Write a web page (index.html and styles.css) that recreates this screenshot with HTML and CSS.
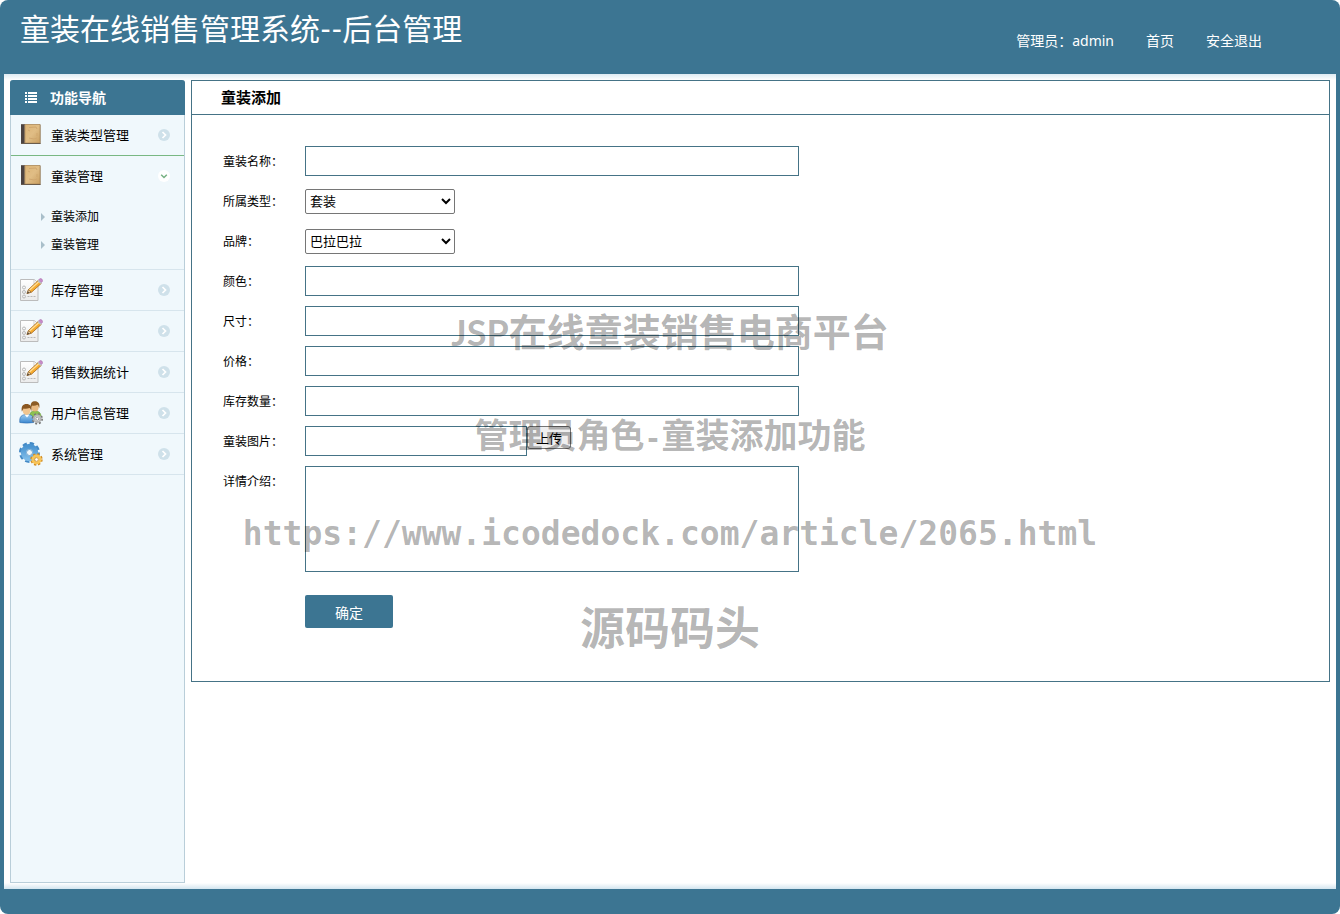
FILE: index.html
```html
<!DOCTYPE html>
<html lang="zh-CN">
<head>
<meta charset="utf-8">
<title>童装在线销售管理系统--后台管理</title>
<link rel="stylesheet" href="styles.css">
</head>
<body>
<svg class="defs" aria-hidden="true">
  <linearGradient id="g-cover" x1="0" y1="0" x2="1" y2="1"><stop offset="0" stop-color="#ddb577"/><stop offset=".5" stop-color="#e0bd85"/><stop offset="1" stop-color="#c99f61"/></linearGradient>
  <linearGradient id="g-paper" x1="0" y1="0" x2="0" y2="1"><stop offset="0" stop-color="#ffffff"/><stop offset="1" stop-color="#ebebeb"/></linearGradient>
  <linearGradient id="g-blue" x1="0" y1="0" x2="0" y2="1"><stop offset="0" stop-color="#9ccdf0"/><stop offset="1" stop-color="#3b86cf"/></linearGradient>
  <linearGradient id="g-gear" x1="0" y1="0" x2="0" y2="1"><stop offset="0" stop-color="#4a94d0"/><stop offset="1" stop-color="#7dbbe8"/></linearGradient>
  <symbol id="i-book" viewBox="0 0 24 24">
    <path d="M2 1.500h19.500V21H2z" fill="#7d684d"/>
    <path d="M6 1.500h15V20H6z" fill="url(#g-cover)" stroke="#a98552" stroke-width=".6"/>
    <path d="M2 1.300h4V20.500H2z" fill="#4c4341"/>
    <path d="M5 1.300h1V20.500H5z" fill="#89745b"/>
    <path d="M10 4.500l7-.5 1 2M9 7l2 1M10 15l5 1 3-1M18 10v3" fill="none" stroke="#d0a76f" stroke-width="1"/>
    <path d="M2 20.500h19.500" stroke="#665a4c" stroke-width=".9"/>
  </symbol>
  <symbol id="i-edit" viewBox="0 0 24 24">
    <path d="M1.500 1.500h14l3.500 4V22.500h-17.500z" fill="url(#g-paper)" stroke="#bcbcbc"/>
    <path d="M15 1.500v4.500h4" fill="#fff" stroke="#cfcfcf"/>
    <g fill="none" stroke="#b9b9b9"><circle cx="5" cy="9.500" r="1.500"/><circle cx="5" cy="14" r="1.500"/><circle cx="5" cy="18.500" r="1.500"/><path d="M8.500 18.500h8" stroke-dasharray="2 1"/><path d="M8 14h3"/></g>
    <path d="M8 15.500l1.500-4L19.200 2.500l3 3-9.700 8.700z" fill="#f7ab2f" stroke="#a66a20" stroke-width=".8"/>
    <path d="M10.500 12L20 3.500" stroke="#ffe09a" stroke-width="1.200"/>
    <path d="M8 15.500l1.500-3.700 2.600 2.200z" fill="#f4d9ad" stroke="#79522a" stroke-width=".6"/>
    <path d="M8 15.500l1.100-2 1 1z" fill="#333"/>
    <path d="M18.600 3l1-1 2.900 2.900-1 1z" fill="#b8c1c9"/>
    <path d="M19.800 1.700c1-1.400 2.200-1.400 3.200-.5.900 1 .9 2-.5 3.300z" fill="#c98bc9" stroke="#a369a8" stroke-width=".5"/>
  </symbol>
  <symbol id="i-users" viewBox="0 0 24 24">
    <path d="M10.500 15.500c0-4 2-5.500 5.500-5.500s6 1.500 6 6z" fill="#8cc152" stroke="#659a34" stroke-width=".6"/>
    <ellipse cx="16" cy="6" rx="3.700" ry="4.500" fill="#e8b981"/>
    <path d="M11.800 7.500C11 2 13 .3 16 .3s5.200 2 4.200 7c-.5-2-1-3-1.600-3.500-2 1-4.500 1-5.500.7z" fill="#8b5b25"/>
    <path d="M.8 21.500c-.5-6 1.700-8 7.200-8s7.200 2.500 6.700 8q-7 1.200-13.900 0z" fill="url(#g-blue)" stroke="#3472b5" stroke-width=".7"/>
    <path d="M5.500 13.500l2.500 3 2.500-3" fill="#fff"/>
    <ellipse cx="7.500" cy="9" rx="4" ry="5" fill="#f1c58f"/>
    <path d="M2.800 10.500C2 5 4 3 7.500 3s5.800 2 4.800 7.500c-.5-2-.8-2.700-1.700-3.500-2 .8-4.600.9-6 .5z" fill="#8a5722"/>
    <circle cx="18.300" cy="17.800" r="4.700" fill="none" stroke="#777" stroke-width="2" stroke-dasharray="1.900 1.790"/>
    <circle cx="18.300" cy="17.800" r="3.300" fill="#f2f2f2" stroke="#b5b5b5" stroke-width="2"/>
    <circle cx="18.300" cy="17.800" r="1.500" fill="#fff" stroke="#777" stroke-width=".7"/>
  </symbol>
  <symbol id="i-gears" viewBox="0 0 24 24">
    <circle cx="10.500" cy="10.500" r="9" fill="none" stroke="#4389c5" stroke-width="3" stroke-dasharray="4.200 2.860"/>
    <circle cx="10.500" cy="10.500" r="6" fill="none" stroke="url(#g-gear)" stroke-width="5.500"/>
    <circle cx="10.500" cy="10.500" r="3" fill="#f0f8fc" stroke="#4587bd" stroke-width=".7"/>
    <circle cx="17.500" cy="17.500" r="5" fill="none" stroke="#d18a20" stroke-width="2.400" stroke-dasharray="2.200 1.730"/>
    <circle cx="17.500" cy="17.500" r="3.500" fill="none" stroke="#f8c456" stroke-width="3"/>
    <circle cx="17.500" cy="17.500" r="1.800" fill="#fff" stroke="#c88525" stroke-width=".7"/>
  </symbol>
  <symbol id="i-next" viewBox="0 0 12 12"><circle cx="6" cy="6" r="6" fill="#cfe1ea"/><path d="M4.500 3l3 3-3 3" fill="none" stroke="#fff" stroke-width="1.700"/></symbol>
  <symbol id="i-open" viewBox="0 0 12 12"><circle cx="6" cy="6" r="6" fill="#fff"/><path d="M3.200 4.800L6 7.500l2.800-2.700" fill="none" stroke="#76b183" stroke-width="1.500"/></symbol>
</svg>

<div class="app">
  <header class="top">
    <h1 class="brand">童装在线销售管理系统--后台管理</h1>
    <nav class="account">
      <span>管理员：admin</span>
      <a href="#home">首页</a>
      <a href="#logout">安全退出</a>
    </nav>
  </header>

  <div class="body">
    <nav class="side" aria-label="功能导航">
      <h2 class="side-title">
        <svg class="list-icon" viewBox="0 0 12 11" aria-hidden="true"><path d="M0 0h2v2H0zM3 0h9v2H3zM0 3h2v2H0zM3 3h9v2H3zM0 6h2v2H0zM3 6h9v2H3zM0 9h2v2H0zM3 9h9v2H3z" fill="#fff"/></svg>
        功能导航
      </h2>
      <ul class="menu">
        <li class="group before-open"><a class="item" href="#type"><svg class="icon"><use href="#i-book"/></svg><span class="name">童装类型管理</span><svg class="arrow"><use href="#i-next"/></svg></a></li>
        <li class="group"><a class="item" href="#clothes"><svg class="icon"><use href="#i-book"/></svg><span class="name">童装管理</span><svg class="arrow"><use href="#i-open"/></svg></a>
          <ul class="sub">
            <li><a class="sub-item" href="#add">童装添加</a></li>
            <li><a class="sub-item" href="#manage">童装管理</a></li>
          </ul>
        </li>
        <li class="group"><a class="item" href="#stock-list"><svg class="icon"><use href="#i-edit"/></svg><span class="name">库存管理</span><svg class="arrow"><use href="#i-next"/></svg></a></li>
        <li class="group"><a class="item" href="#orders"><svg class="icon"><use href="#i-edit"/></svg><span class="name">订单管理</span><svg class="arrow"><use href="#i-next"/></svg></a></li>
        <li class="group"><a class="item" href="#sales"><svg class="icon"><use href="#i-edit"/></svg><span class="name">销售数据统计</span><svg class="arrow"><use href="#i-next"/></svg></a></li>
        <li class="group"><a class="item" href="#users"><svg class="icon"><use href="#i-users"/></svg><span class="name">用户信息管理</span><svg class="arrow"><use href="#i-next"/></svg></a></li>
        <li class="group"><a class="item" href="#system"><svg class="icon"><use href="#i-gears"/></svg><span class="name">系统管理</span><svg class="arrow"><use href="#i-next"/></svg></a></li>
      </ul>
    </nav>

    <main class="panel">
      <h2 class="panel-title">童装添加</h2>
      <form class="form">
        <div class="row"><label class="label" for="name">童装名称：</label><input class="text" id="name" type="text"></div>
        <div class="row"><label class="label" for="type">所属类型：</label><select class="select" id="type"><option>套装</option></select></div>
        <div class="row"><label class="label" for="brand">品牌：</label><select class="select" id="brand"><option>巴拉巴拉</option></select></div>
        <div class="row"><label class="label" for="color">颜色：</label><input class="text" id="color" type="text"></div>
        <div class="row"><label class="label" for="size">尺寸：</label><input class="text" id="size" type="text"></div>
        <div class="row"><label class="label" for="price">价格：</label><input class="text" id="price" type="text"></div>
        <div class="row"><label class="label" for="stock">库存数量：</label><input class="text" id="stock" type="text"></div>
        <div class="row row-top"><label class="label" for="image">童装图片：</label><input class="text file" id="image" type="text"><button class="upload" type="button">上传</button></div>
        <div class="row row-top"><label class="label" for="intro">详情介绍：</label><textarea class="text area" id="intro"></textarea></div>
        <div class="actions"><button class="submit" type="submit">确定</button></div>
      </form>
    </main>
  </div>
  <footer class="foot"></footer>

  <div class="watermark">
    <p class="mark mark-name"><span class="latin">JSP</span>在线童装销售电商平台</p>
    <p class="mark mark-role">管理员角色<span class="dash">-</span>童装添加功能</p>
    <p class="mark mark-url">https://www.icodedock.com/article/2065.html</p>
    <p class="mark mark-site">源码码头</p>
  </div>
</div>
</body>
</html>
```

FILE: styles.css
```css
* {
  box-sizing: border-box;
}

body {
  margin: 0;
  background: #fff;
  color: #000;
  font: 12px/20px "Noto Sans", "Noto Sans CJK SC", sans-serif;
}

h1, h2, p, ul {
  margin: 0;
  padding: 0;
}

ul {
  list-style: none;
}

a {
  color: inherit;
  text-decoration: none;
}

input, select, textarea, button {
  margin: 0;
  font-family: inherit;
}

.defs {
  position: absolute;
  width: 0;
  height: 0;
}

.app {
  position: relative;
  display: flex;
  flex-direction: column;
  min-height: 100vh;
  padding: 0 4px;
  border-radius: 8px;
  background: #3c7592;
}

.top {
  display: flex;
  justify-content: space-between;
  height: 74px;
  padding: 8px 74px 0 16px;
  color: #fff;
}

.brand {
  font: 400 30px/40px "Lato", "Noto Sans CJK SC", sans-serif;
}

.account {
  display: flex;
  gap: 32px;
  padding-top: 23px;
  font-size: 14px;
}

.body {
  display: flex;
  flex: 1;
  align-items: flex-start;
  gap: 6px;
  padding: 6px;
  background:
    linear-gradient(#deebf3, #fff) top / 100% 6px no-repeat,
    linear-gradient(#fff, #d3e5ef) bottom / 100% 6px no-repeat,
    #fff;
}

.foot {
  height: 25px;
}

.side {
  align-self: stretch;
  flex: none;
  width: 175px;
  border: 1px solid #b9ced9;
  border-top: 0;
  border-radius: 3px 3px 0 0;
  background: #f0f8fc;
}

.side-title {
  display: flex;
  align-items: center;
  gap: 13px;
  height: 35px;
  margin: 0 -1px;
  padding-left: 15px;
  border-radius: 3px 3px 0 0;
  background: #3c7592;
  color: #fff;
  font-size: 14px;
}

.list-icon {
  width: 12px;
  height: 11px;
}

.group {
  border-bottom: 1px solid #d7e5ed;
}

.before-open {
  border-bottom-color: #79b883;
}

.item {
  display: flex;
  align-items: center;
  gap: 8px;
  height: 40px;
  padding: 0 14px 0 8px;
  font-size: 13px;
}

.icon {
  width: 24px;
  height: 24px;
}

.name {
  flex: 1;
}

.arrow {
  width: 12px;
  height: 12px;
}

.sub {
  padding: 7px 0 10px;
}

.sub-item {
  display: flex;
  align-items: center;
  gap: 6px;
  height: 28px;
  padding-left: 30px;
}

.sub-item::before {
  content: "";
  border: 4px solid transparent;
  border-right: 0;
  border-left-color: #a9bfca;
}

.panel {
  flex: 1;
  border: 1px solid #457386;
}

.panel-title {
  height: 34px;
  padding-left: 29px;
  border-bottom: 1px solid #457386;
  font-size: 15px;
  line-height: 33px;
}

.form {
  display: flex;
  flex-direction: column;
  gap: 10px;
  padding: 31px 31px 53px;
}

.row {
  display: flex;
  align-items: center;
  min-height: 30px;
}

.row-top {
  align-items: flex-start;
}

.label {
  flex: none;
  width: 82px;
  height: 30px;
  line-height: 32px;
}

.text {
  width: 494px;
  height: 30px;
  border: 1px solid #457386;
  border-radius: 0;
  background: #fff;
}

.file {
  width: 222px;
}

.area {
  height: 106px;
  resize: none;
}

.select {
  width: 150px;
  height: 25px;
  border: 1px solid #767676;
  border-radius: 2px;
  background: #fff;
  color: #000;
  font-size: 13px;
}

.upload {
  width: 44px;
  height: 23px;
  padding: 0;
  border: 1px solid #767676;
  border-radius: 3px;
  background: #efefef;
  color: #000;
  font-size: 13px;
  line-height: 20px;
}

.actions {
  padding: 13px 0 0 82px;
}

.submit {
  display: block;
  width: 88px;
  height: 33px;
  border: 0;
  border-radius: 2px;
  background: #3c7592;
  color: #fff;
  font-size: 14px;
}

/* Translucent overlay text; clicks pass through to the form */
.watermark {
  position: absolute;
  inset: 300px 0 auto;
  display: flex;
  flex-direction: column;
  align-items: center;
  color: rgba(0, 0, 0, 0.3);
  font-family: "Noto Sans CJK SC", sans-serif;
  font-weight: 700;
  white-space: nowrap;
  pointer-events: none;
}

.mark {
  height: 60px;
  line-height: 60px;
}

.mark-name {
  font-size: 38px;
}

.mark-role {
  margin-top: 44px;
  font-size: 34px;
}

.mark-url {
  margin-top: 40px;
  font-family: "DejaVu Sans Mono", monospace;
  font-size: 33px;
}

.mark-site {
  margin-top: 32px;
  font-size: 45px;
}

.latin {
  font-family: "Lato", sans-serif;
  font-size: 36px;
  line-height: 1;
}

.dash {
  font-family: "DejaVu Sans Mono", monospace;
  font-size: 28px;
  line-height: 1;
}
```
